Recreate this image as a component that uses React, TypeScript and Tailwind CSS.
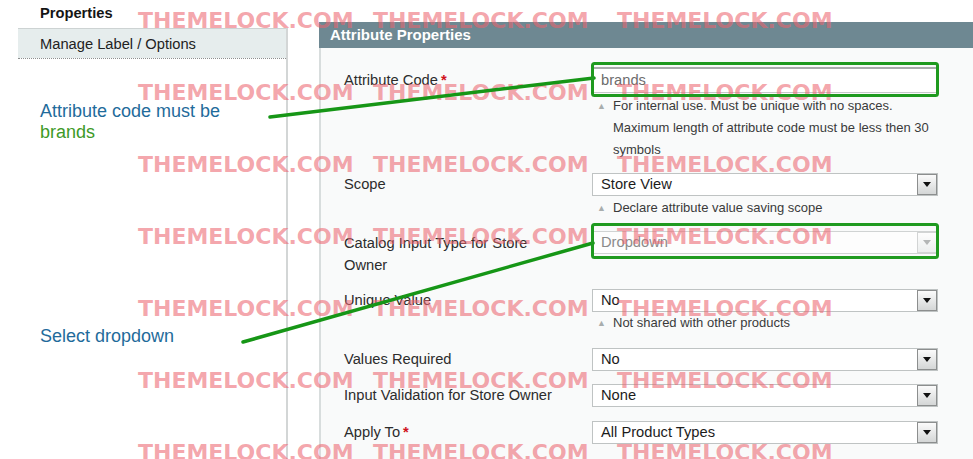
import React from "react";

function Arrow({ disabled }: { disabled?: boolean }) {
  return (
    <div
      className={
        disabled
          ? "w-[20px] h-[21px] border border-[#d2d4d4] bg-linear-to-b from-[#fdfdfd] to-[#eceeee] flex items-center justify-center"
          : "w-[20px] h-[21px] border border-[#8c8e8e] bg-linear-to-b from-[#fbfbfb] to-[#d4d6d6] flex items-center justify-center"
      }
    >
      <svg width="8" height="5" viewBox="0 0 8 5">
        <path d="M0 0H8L4 5Z" fill={disabled ? "#b4b6b6" : "#111"} />
      </svg>
    </div>
  );
}

function Select({ value, disabled }: { value: string; disabled?: boolean }) {
  return (
    <div
      className={
        disabled
          ? "w-[346px] h-[23px] border border-[#d0d3d3] bg-[#fdfdfd] flex items-center justify-between"
          : "w-[346px] h-[23px] border border-[#bfc3c3] bg-white flex items-center justify-between"
      }
    >
      <span
        className={
          disabled
            ? "pl-[8px] text-[14.7px] leading-[21px] text-[#8a8a8a]"
            : "pl-[8px] text-[14.7px] leading-[21px] text-[#1c1c1c]"
        }
      >
        {value}
      </span>
      <Arrow disabled={disabled} />
    </div>
  );
}

function Note({ lines }: { lines: string[] }) {
  return (
    <div className="flex text-[13px] leading-[22px] text-[#3a3a3a]">
      <span className="w-[21px] pl-[5px] text-[9px] text-[#a9adad] leading-[22px]">▲</span>
      <div className="whitespace-nowrap">
        {lines.map((l) => (
          <div key={l}>{l}</div>
        ))}
      </div>
    </div>
  );
}

function Star() {
  return <span className="text-[#d0121a] font-bold ml-[3px]">*</span>;
}

const WM = "THEMELOCK.COM";

export default function App() {
  const rows = [0, 1, 2, 3, 4, 5, 6];
  return (
    <div className="relative w-[973px] h-[459px] overflow-hidden bg-white font-['Liberation_Sans',Arial,sans-serif] text-[#2c2c2c]">
      <div className="flex h-full">
        {/* Sidebar */}
        <aside className="w-[288px] shrink-0 flex flex-col pl-[18px]">
          <div className="h-[28px] pl-[22px] pt-[4px] text-[14.7px] font-bold leading-[18px] text-[#151515]">
            Properties
          </div>
          <div className="flex-1 border-r-2 border-[#d3d6d6]">
            <div className="h-[30px] bg-[#e6eded] border-t border-[#cdd3d3] pl-[22px] pt-[1px] flex items-center text-[14.7px] text-[#222]">
              Manage Label / Options
            </div>
            <div className="h-0 border-b border-dotted border-[#8d8f8f]" />
            <div className="pl-[22px] mt-[42px] text-[18px] leading-[21px]">
              <div className="text-[#1f6b9b]">Attribute code must be</div>
              <div className="text-[#3d9a27]">brands</div>
            </div>
            <div className="pl-[22px] mt-[183px] text-[18px] leading-[21px] text-[#1f6b9b]">
              Select dropdown
            </div>
          </div>
        </aside>

        {/* Main panel */}
        <main className="ml-[31px] mt-[22px] flex-1 flex flex-col">
          <div className="h-[26px] bg-[#6e8892] text-white font-bold text-[15px] flex items-center pl-[11px]">
            Attribute Properties
          </div>
          <div className="flex-1 bg-[#f9fafa] border-l-2 border-[#d8dddd] pl-[23px]">
            {/* Attribute Code */}
            <div className="flex mt-[19px]">
              <div className="w-[248px] text-[14.7px] leading-[26px]">
                Attribute Code
                <Star />
              </div>
              <div className="w-[346px]">
                <div className="h-[26px] border border-[#c6c9c9] border-t-2 border-t-[#a9acac] bg-white flex items-center pl-[8px] text-[14.7px] text-[#6c6c6c]">
                  brands
                </div>
                <div className="mt-[2px]">
                  <Note
                    lines={[
                      "For internal use. Must be unique with no spaces.",
                      "Maximum length of attribute code must be less then 30",
                      "symbols",
                    ]}
                  />
                </div>
              </div>
            </div>

            {/* Scope */}
            <div className="flex mt-[12px]">
              <div className="w-[248px] text-[14.7px] leading-[23px]">Scope</div>
              <div className="w-[346px]">
                <Select value="Store View" />
                <div className="mt-[1px]">
                  <Note lines={["Declare attribute value saving scope"]} />
                </div>
              </div>
            </div>

            {/* Catalog Input Type */}
            <div className="flex mt-[12px]">
              <div className="w-[248px] text-[14.7px] leading-[22px] pt-[1px]">
                Catalog Input Type for Store
                <br />
                Owner
              </div>
              <div className="w-[346px]">
                <Select value="Dropdown" disabled />
              </div>
            </div>

            {/* Unique Value */}
            <div className="flex mt-[13px]">
              <div className="w-[248px] text-[14.7px] leading-[23px]">Unique Value</div>
              <div className="w-[346px]">
                <Select value="No" />
                <Note lines={["Not shared with other products"]} />
              </div>
            </div>

            {/* Values Required */}
            <div className="flex mt-[14px]">
              <div className="w-[248px] text-[14.7px] leading-[23px]">Values Required</div>
              <Select value="No" />
            </div>

            {/* Input Validation */}
            <div className="flex mt-[13px]">
              <div className="w-[248px] text-[14.7px] leading-[23px]">
                Input Validation for Store Owner
              </div>
              <Select value="None" />
            </div>

            {/* Apply To */}
            <div className="flex mt-[14px]">
              <div className="w-[248px] text-[14.7px] leading-[23px]">
                Apply To
                <Star />
              </div>
              <Select value="All Product Types" />
            </div>
          </div>
        </main>
      </div>

      {/* Watermark */}
      <div className="absolute inset-0 pointer-events-none flex flex-col gap-[50px] pt-[10px] pl-[138px]">
        {rows.map((r) => (
          <div
            key={r}
            className="flex whitespace-nowrap font-['DejaVu_Sans',sans-serif] text-[22px] leading-[22px] font-bold text-[rgba(236,100,110,0.58)]"
          >
            <span className="w-[235px]">{WM}</span>
            <span className="w-[244px]">{WM}</span>
            <span>{WM}</span>
          </div>
        ))}
      </div>

      {/* Annotation drawing */}
      <svg
        className="absolute inset-0 pointer-events-none"
        width="973"
        height="459"
        viewBox="0 0 973 459"
      >
        <line x1="270" y1="117" x2="594" y2="78" stroke="#169616" strokeWidth="3.5" strokeLinecap="round" />
        <line x1="243" y1="342" x2="593" y2="243" stroke="#169616" strokeWidth="3.5" strokeLinecap="round" />
        <rect x="592.5" y="63.5" width="345" height="32" rx="2" fill="none" stroke="#1f9a1f" strokeWidth="3" />
        <rect x="592.5" y="224.5" width="345" height="33" rx="2" fill="none" stroke="#1f9a1f" strokeWidth="3" />
      </svg>
    </div>
  );
}
